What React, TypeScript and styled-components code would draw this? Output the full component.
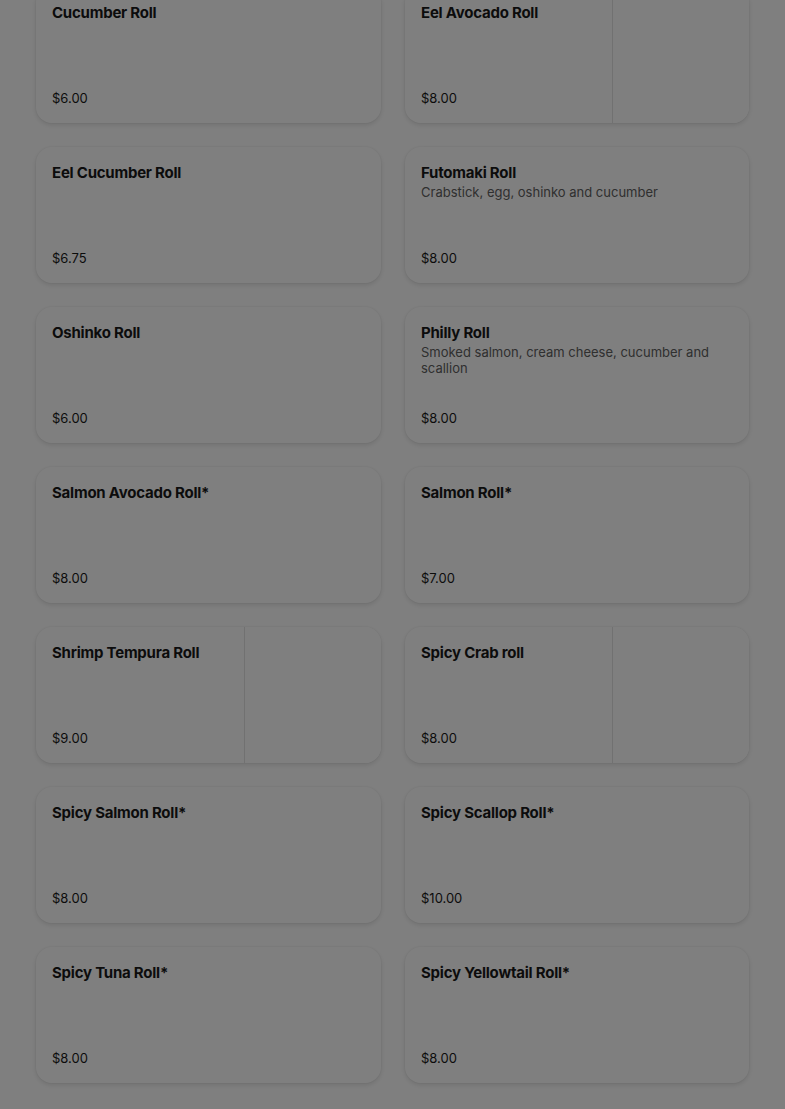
import React from "react";
import styled, { createGlobalStyle } from "styled-components";

const GlobalStyle = createGlobalStyle`
  html, body { margin: 0; padding: 0; background: #ffffff; }
  body { font-family: Inter, "Noto Sans", sans-serif; color: #191919; overflow: hidden; }
  * { box-sizing: border-box; }
`;

const Page = styled.div`
  width: 785px;
  height: 1109px;
  overflow: hidden;
  background: #ffffff;
`;

const Grid = styled.div`
  display: grid;
  grid-template-columns: 345px 344px;
  column-gap: 24px;
  row-gap: 24px;
  padding: 0 36px;
  margin-top: -13px;
`;

const Card = styled.div`
  display: flex;
  height: 136px;
  background: #ffffff;
  border-radius: 16px;
  box-shadow: 0 2px 5px rgba(0, 0, 0, 0.12), 0 0 0 1px rgba(0, 0, 0, 0.02);
  overflow: hidden;
`;

const Info = styled.div`
  flex: 1;
  min-width: 0;
  display: flex;
  flex-direction: column;
  padding: 16px 16px 15px 16px;
`;

const Title = styled.div`
  font-size: 15px;
  line-height: 20px;
  font-weight: 700;
  letter-spacing: -0.015em;
  color: #191919;
`;

const Desc = styled.div`
  font-size: 13px;
  line-height: 16px;
  color: #606060;
  margin-top: 1px;
`;

const Price = styled.div`
  margin-top: auto;
  font-size: 13px;
  line-height: 20px;
  color: #191919;
`;

const ImageSlot = styled.div`
  width: 137px;
  flex: none;
  border-left: 1px solid #e2e2e2;
  background: #ffffff;
`;

const Overlay = styled.div`
  position: fixed;
  inset: 0;
  background: rgba(0, 0, 0, 0.5);
`;

type Item = { name: string; desc?: string; price: string; img?: boolean };

const items: Item[] = [
  { name: "Cucumber Roll", price: "$6.00" },
  { name: "Eel Avocado Roll", price: "$8.00", img: true },
  { name: "Eel Cucumber Roll", price: "$6.75" },
  { name: "Futomaki Roll", desc: "Crabstick, egg, oshinko and cucumber", price: "$8.00" },
  { name: "Oshinko Roll", price: "$6.00" },
  { name: "Philly Roll", desc: "Smoked salmon, cream cheese, cucumber and scallion", price: "$8.00" },
  { name: "Salmon Avocado Roll*", price: "$8.00" },
  { name: "Salmon Roll*", price: "$7.00" },
  { name: "Shrimp Tempura Roll", price: "$9.00", img: true },
  { name: "Spicy Crab roll", price: "$8.00", img: true },
  { name: "Spicy Salmon Roll*", price: "$8.00" },
  { name: "Spicy Scallop Roll*", price: "$10.00" },
  { name: "Spicy Tuna Roll*", price: "$8.00" },
  { name: "Spicy Yellowtail Roll*", price: "$8.00" },
];

export default function App() {
  return (
    <Page>
      <GlobalStyle />
      <Grid>
        {items.map((it) => (
          <Card key={it.name}>
            <Info>
              <Title>{it.name}</Title>
              {it.desc && <Desc>{it.desc}</Desc>}
              <Price>{it.price}</Price>
            </Info>
            {it.img && <ImageSlot />}
          </Card>
        ))}
      </Grid>
      <Overlay />
    </Page>
  );
}
